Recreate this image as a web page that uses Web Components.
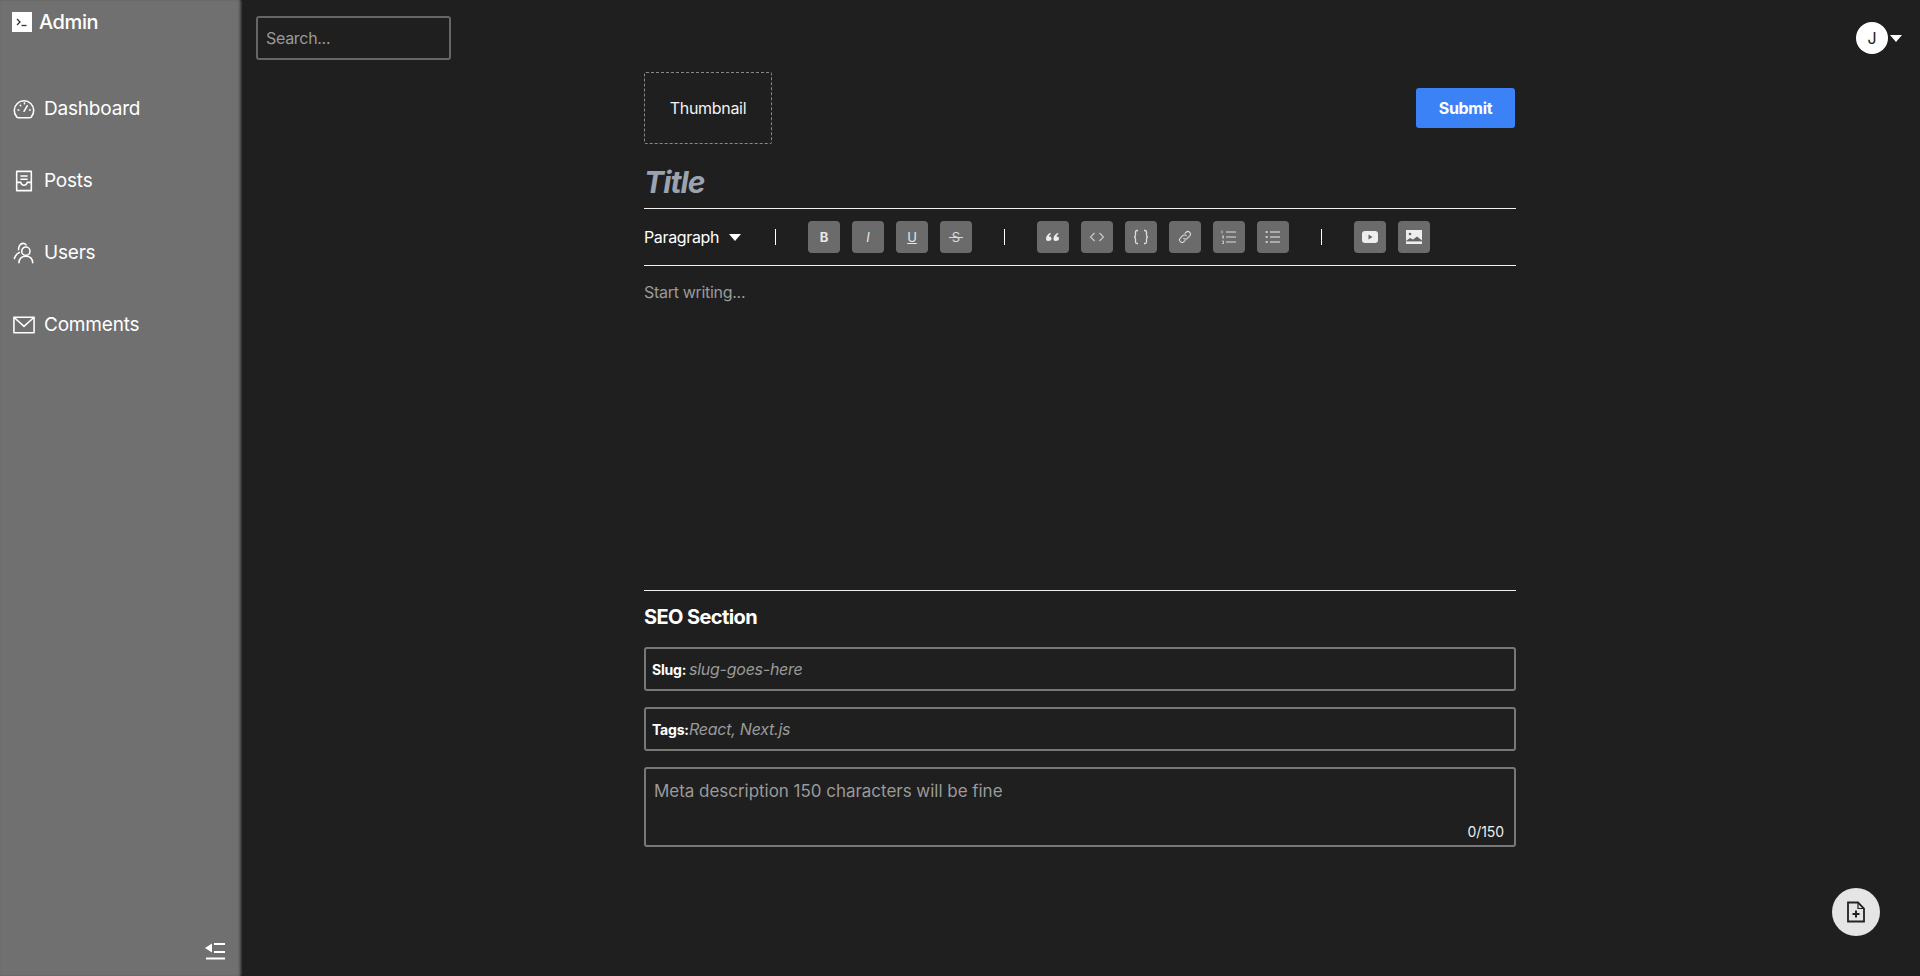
<!DOCTYPE html>
<html><head><meta charset="utf-8"><title>Admin</title>
<style>
html,body{margin:0;height:976px;overflow:hidden;background:#1f1f1f;color:#fff;font-family:Inter,"Liberation Sans",sans-serif}
</style></head><body>
<admin-shell>
  <admin-sidebar slot="side">
    <nav-item label="Dashboard"><svg viewBox="0 0 24 24" fill="none" stroke="#fff" stroke-width="1.700" stroke-linecap="round" stroke-linejoin="round"><path d="M6 21.500h12c.8 0 1.500-.3 2-.9A10.600 10.600 0 1 0 4 20.600c.5.600 1.200.9 2 .9z"/><path d="M12 14.500l3.500-6M5.500 13h.8M7.900 7.900l.5.500M12.500 5.500v.8M18 13h.8"/></svg></nav-item>
    <nav-item label="Posts"><svg viewBox="0 0 24 24" fill="none" stroke="#fff" stroke-width="1.700" stroke-linejoin="round"><path d="M4 1.500h16v21H4z"/><path d="M8 6.500h8M8 10h8M4 13.500h4.500c.5 2 1.800 3.200 3.500 3.200s3-1.200 3.500-3.200H20"/></svg></nav-item>
    <nav-item label="Users"><svg viewBox="0 0 24 24" fill="none" stroke="#fff" stroke-width="1.700" stroke-linecap="round"><circle cx="14" cy="10" r="4.500"/><path d="M6.500 22.500c.3-4.500 3-7 7.500-7s7.200 2.500 7.500 7M6 8.500C6 4.500 8 1.500 11 1.500c1.500 0 2.600.6 3.300 1.700M7 11.500C4.500 12.500 2.400 15 1.500 18"/></svg></nav-item>
    <nav-item label="Comments"><svg viewBox="0 0 24 24" fill="none" stroke="#fff" stroke-width="1.700" stroke-linejoin="round"><path d="M1 3.500h22v17H1z"/><path d="M1 3.500L12 13.500l11-10"/></svg></nav-item>
  </admin-sidebar>
  <top-bar slot="top"></top-bar>
  <post-editor slot="main"></post-editor>
  <fab-button slot="fab"></fab-button>
</admin-shell>
<script>
function def(name,html,setup){customElements.define(name,class extends HTMLElement{constructor(){super();this.attachShadow({mode:'open'}).innerHTML=typeof html==='function'?html(this):html;}connectedCallback(){if(setup&&!this._s){this._s=1;setup(this)}}})}
def('admin-shell',`<style>
:host{display:flex;width:1920px;height:976px;position:relative;overflow:hidden}
.s{flex:0 0 240px;display:flex}
.m{flex:1;display:flex;flex-direction:column;min-width:0}
</style><div class="s"><slot name="side"></slot></div><div class="m"><slot name="top"></slot><slot name="main"></slot></div><slot name="fab"></slot>`);
def('admin-sidebar',`<style>
:host{display:flex;flex-direction:column;width:240px;height:976px;background:#707070;box-shadow:1px 0 2px rgba(112,112,112,.8),inset -1px 0 2px rgba(31,31,31,.3);position:relative;z-index:1}
.brand{display:flex;align-items:center;gap:7px;height:20px;padding:12px 12px 0;font-size:20px;font-weight:500;line-height:20px;letter-spacing:-.4px}
.logo{width:20px;height:20px;background:#fff;display:block}
nav{display:flex;flex-direction:column;gap:44px;padding:63px 0 0 13px}
.foot{margin-top:auto;display:flex;justify-content:flex-end;padding:0 14px 14px 0}
.foot svg{width:22px;height:20px;display:block}
</style><div class="brand"><svg class="logo" viewBox="0 0 20 20"><rect width="20" height="20" fill="#fff"/><path d="M5 7l3 3-3 3" fill="none" stroke="#333" stroke-width="1.300"/><path d="M9.500 13.500h5" stroke="#333" stroke-width="1.300"/></svg><span>Admin</span></div>
<nav><slot></slot></nav>
<div class="foot"><svg viewBox="0 0 22 20"><path d="M1 6l7-4.500v9z" fill="#fff"/><path d="M10 2h11M10 10h11M2 16.500h19" stroke="#fff" stroke-width="1.800" fill="none"/></svg></div>`);
def('nav-item',el=>`<style>
:host{display:flex;align-items:center;gap:9px;height:28px;font-size:19px;font-weight:400;line-height:28px;letter-spacing:-.2px}
::slotted(svg){width:22px;height:22px;display:block;flex:none}
</style><slot></slot><span>${el.getAttribute('label')}</span>`);
def('top-bar',`<style>
:host{display:flex;justify-content:space-between;align-items:flex-start;padding:16px 18px 0 16px;height:56px;flex:none}
.search{box-sizing:border-box;width:195px;height:44px;border:2px solid #666;border-radius:3px;display:flex;align-items:center;padding-left:8px;font-size:16px;color:#9a9a9a;letter-spacing:-.3px}
.user{display:flex;align-items:center;gap:2px;margin-top:6px}
.av{width:32px;height:32px;border-radius:50%;background:#fff;color:#222;display:flex;align-items:center;justify-content:center;font-size:16px}
.car{width:0;height:0;border:6px solid transparent;border-top:7px solid #fff;border-bottom:0}
</style><div class="search">Search...</div><div class="user"><div class="av">J</div><div class="car"></div></div>`);
const ic={
b:`<b style="font:700 13px Inter,sans-serif">B</b>`,
i:`<i style="font:italic 400 13px Inter,sans-serif">I</i>`,
u:`<u style="font:400 13px Inter,sans-serif">U</u>`,
s:`<span style="font:400 13px Inter,sans-serif;position:relative;color:#ddd">S<span style="position:absolute;left:-3px;right:-3px;top:8px;height:1px;background:#ddd"></span></span>`,
q:`<svg viewBox="0 0 16 16"><path d="M3 12c-1.400 0-2-1-2-2.300C1 7 3 4.800 5.500 4l.5 1C4.800 5.700 4 6.500 3.900 7.600 5.500 7.400 6.500 8.300 6.500 9.700 6.500 11 5 12 3 12zM10.500 12c-1.400 0-2-1-2-2.300 0-2.700 2-4.900 4.500-5.700l.5 1c-1.200.7-2 1.500-2.100 2.600 1.600-.2 2.600.7 2.600 2.100 0 1.300-1.500 2.300-3.500 2.300z" fill="#eee"/></svg>`,
c:`<svg viewBox="0 0 16 16" fill="none" stroke="#ccc" stroke-width="1.100"><path d="M5.500 4L1.500 8l4 4M10.500 4l4 4-4 4"/></svg>`,
cb:`<svg viewBox="0 0 16 16" fill="none" stroke="#ddd" stroke-width="1.300"><path d="M5 1.500H4c-1 0-1.500.5-1.500 1.500v3c0 1-.5 2-1.500 2 1 0 1.500 1 1.500 2v3c0 1 .5 1.500 1.500 1.500h1M11 1.500h1c1 0 1.500.5 1.500 1.500v3c0 1 .5 2 1.500 2-1 0-1.500 1-1.500 2v3c0 1-.5 1.500-1.500 1.500h-1"/></svg>`,
l:`<svg viewBox="0 0 16 16" fill="none" stroke="#ddd" stroke-width="1.200" stroke-linecap="round" style="transform:scale(.85)"><path d="M6.500 9.500a3 3 0 0 0 4.300 0l2.700-2.700a3 3 0 0 0-4.300-4.300L8 3.700"/><path d="M9.500 6.500a3 3 0 0 0-4.300 0L2.500 9.200a3 3 0 0 0 4.300 4.300L8 12.300"/></svg>`,
ol:`<svg viewBox="0 0 16 16" fill="none" stroke="#ddd" stroke-width="1"><path d="M5 3h10M5 8h10M5 13h10"/><path d="M1 1.500v3M1 7h1.500v2H1M1 12h1.500v2.500H1" stroke-width=".8"/></svg>`,
ul:`<svg viewBox="0 0 16 16" fill="none" stroke="#eee" stroke-width="1"><path d="M5 3h10M5 8h10M5 13h10"/><path d="M.7 3h2M.7 8h2M.7 13h2" stroke-width="1.500"/></svg>`,
y:`<svg viewBox="0 0 16 16"><rect x="0" y="2" width="16" height="12" rx="3" fill="#eee"/><path d="M6.500 5.500l4 2.500-4 2.500z" fill="#666"/></svg>`,
im:`<svg viewBox="0 0 16 16"><rect x="0" y="1" width="16" height="14" fill="#eee"/><circle cx="4" cy="5" r="1.300" fill="#666"/><path d="M0 12l4-3 3 1.500 4-3 5 4v1H0z" fill="#666"/><path d="M0 13.300h16" stroke="#eee"/></svg>`};
def('tool-btn',el=>`<style>
:host{display:flex;align-items:center;justify-content:center;width:32px;height:32px;border-radius:4px;background:#6b6b6b;color:#e8e8e8;flex:none}
svg{width:16px;height:16px;display:block}
</style>${ic[el.getAttribute('k')]}`);
def('post-editor',`<style>
:host{display:flex;flex-direction:column;width:872px;margin:0 auto;box-sizing:border-box}
.head{display:flex;justify-content:space-between;align-items:center}
.thumb{box-sizing:border-box;width:128px;height:72px;border:1px dashed #888;border-radius:2px;display:flex;align-items:center;justify-content:center;font-size:16px;letter-spacing:-.3px;color:#f2f2f2}
.sub{width:99px;height:40px;border-radius:3px;background:#3b82f6;color:#fff;display:flex;align-items:center;justify-content:center;font-size:16px;font-weight:700;letter-spacing:-.3px;margin-right:1px}
.title{font-size:30px;line-height:36px;font-weight:700;font-style:italic;color:#9ca3af;padding:20px 0 8px;letter-spacing:-.9px;border-bottom:1px solid #f2f2f2;height:36px}
.bar{display:flex;align-items:center;height:56px;border-bottom:1px solid #f2f2f2;box-sizing:content-box}
.para{font-size:16px;letter-spacing:-.35px;display:flex;align-items:center;gap:10px;width:98px;margin-right:33px}
.tri{width:0;height:0;border:6px solid transparent;border-top:7px solid #fff;border-bottom:0}
.sep{width:1px;height:16px;background:#fff;flex:none}
.gp{display:flex;gap:12px;margin:0 32px 0 32px}
.body{box-sizing:border-box;height:325px;padding-top:16px;font-size:16px;line-height:20px;letter-spacing:-.3px;color:#9a9a9a;border-bottom:1px solid #eee}
h2{font-size:20px;line-height:28px;font-weight:700;margin:12px 0 16px;letter-spacing:-.6px}
.field{box-sizing:border-box;height:44px;border:2px solid #777;border-radius:3px;display:flex;align-items:center;padding-left:6px;margin-bottom:16px;font-size:16px;color:#9a9a9a;font-style:italic}
.field b{font-size:14px;font-style:normal;color:#fff;font-weight:700;letter-spacing:-.2px;width:37px;white-space:nowrap;flex:none}
.field span{letter-spacing:-.25px}
.meta{box-sizing:border-box;height:80px;border:2px solid #777;border-radius:3px;position:relative;padding:10px 8px;font-size:17px;line-height:24px;color:#9a9a9a;letter-spacing:-.03px}
.cnt{position:absolute;right:10px;bottom:3px;font-size:14px;line-height:20px;color:#eee;letter-spacing:-.1px}
</style>
<div class="head"><div class="thumb">Thumbnail</div><div class="sub">Submit</div></div>
<div class="title">Title</div>
<div class="bar"><div class="para"><span>Paragraph</span><span class="tri"></span></div><span class="sep"></span>
<div class="gp"><tool-btn k="b"></tool-btn><tool-btn k="i"></tool-btn><tool-btn k="u"></tool-btn><tool-btn k="s"></tool-btn></div><span class="sep"></span>
<div class="gp"><tool-btn k="q"></tool-btn><tool-btn k="c"></tool-btn><tool-btn k="cb"></tool-btn><tool-btn k="l"></tool-btn><tool-btn k="ol"></tool-btn><tool-btn k="ul"></tool-btn></div><span class="sep"></span>
<div class="gp" style="margin-right:0"><tool-btn k="y"></tool-btn><tool-btn k="im"></tool-btn></div></div>
<div class="body">Start writing...</div>
<h2>SEO Section</h2>
<div class="field"><b>Slug:</b><span>slug-goes-here</span></div>
<div class="field"><b>Tags:</b><span>React, Next.js</span></div>
<div class="meta">Meta description 150 characters will be fine<div class="cnt">0/150</div></div>`);
def('fab-button',`<style>
:host{position:absolute;left:1832px;top:888px;width:48px;height:48px;border-radius:50%;background:#e5e5e5;display:flex;align-items:center;justify-content:center}
svg{width:20px;height:22px;display:block}
</style><svg viewBox="0 0 20 22" fill="none" stroke="#222" stroke-width="1.800"><path d="M2 1.500h10l6 6v13H2z"/><path d="M12 1.500v6h6" stroke-width="1.200"/><path d="M10 9.500v7M6.500 13h7" stroke-width="2"/></svg>`);
</script></body></html>
